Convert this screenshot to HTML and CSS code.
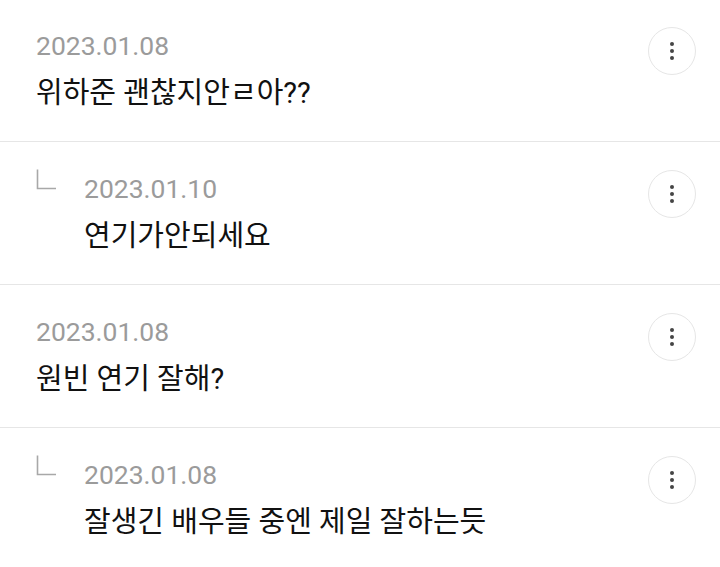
FILE: index.html
```html
<!DOCTYPE html>
<html lang="ko">
<head>
<meta charset="utf-8">
<link rel="stylesheet" href="styles.css">
</head>
<body>
<ul class="list">
  <li class="row">
    <div class="body">
      <div class="date">2023.01.08</div>
      <div class="text">위하준 괜찮지안ㄹ아??</div>
    </div>
    <button class="more" aria-label="more"><span class="dot"></span><span class="dot"></span><span class="dot"></span></button>
  </li>
  <li class="row reply">
    <svg class="mark" width="22" height="22" viewBox="0 0 22 22"><path d="M1.5 1.5V20.5H20" fill="none" stroke="#a8a8a8" stroke-width="1.6"/></svg>
    <div class="body">
      <div class="date">2023.01.10</div>
      <div class="text">연기가안되세요</div>
    </div>
    <button class="more" aria-label="more"><span class="dot"></span><span class="dot"></span><span class="dot"></span></button>
  </li>
  <li class="row">
    <div class="body">
      <div class="date">2023.01.08</div>
      <div class="text">원빈 연기 잘해?</div>
    </div>
    <button class="more" aria-label="more"><span class="dot"></span><span class="dot"></span><span class="dot"></span></button>
  </li>
  <li class="row reply">
    <svg class="mark" width="22" height="22" viewBox="0 0 22 22"><path d="M1.5 1.5V20.5H20" fill="none" stroke="#a8a8a8" stroke-width="1.6"/></svg>
    <div class="body">
      <div class="date">2023.01.08</div>
      <div class="text">잘생긴 배우들 중엔 제일 잘하는듯</div>
    </div>
    <button class="more" aria-label="more"><span class="dot"></span><span class="dot"></span><span class="dot"></span></button>
  </li>
</ul>
</body>
</html>
```

FILE: styles.css
```css
html, body {
  margin: 0;
  padding: 0;
  background: #ffffff;
}
body {
  font-family: Roboto, "Noto Sans CJK KR", sans-serif;
  overflow: hidden;
}
.list {
  list-style: none;
  margin: -1px 0 0 0;
  padding: 0;
}
.row {
  display: flex;
  align-items: flex-start;
  box-sizing: border-box;
  height: 143px;
  padding: 26px 24px 0 36px;
  border-bottom: 1px solid #e6e6e6;
}
.mark {
  flex: 0 0 auto;
  width: 22px;
  height: 22px;
  margin-right: 26px;
}
.body {
  flex: 1 1 auto;
  padding-top: 5px;
}
.date {
  font-size: 26.5px;
  line-height: 32px;
  color: #9b9b9b;
}
.text {
  margin-top: 13px;
  font-size: 29px;
  line-height: 37px;
  color: #111111;
}
.more {
  flex: 0 0 auto;
  box-sizing: border-box;
  width: 48px;
  height: 48px;
  margin-top: 2px;
  border: 1px solid #e6e6e6;
  border-radius: 50%;
  background: #ffffff;
  padding: 0;
  display: flex;
  flex-direction: column;
  align-items: center;
  justify-content: center;
  gap: 3px;
}
.dot {
  width: 4px;
  height: 4px;
  border-radius: 50%;
  background: #454545;
}
```
